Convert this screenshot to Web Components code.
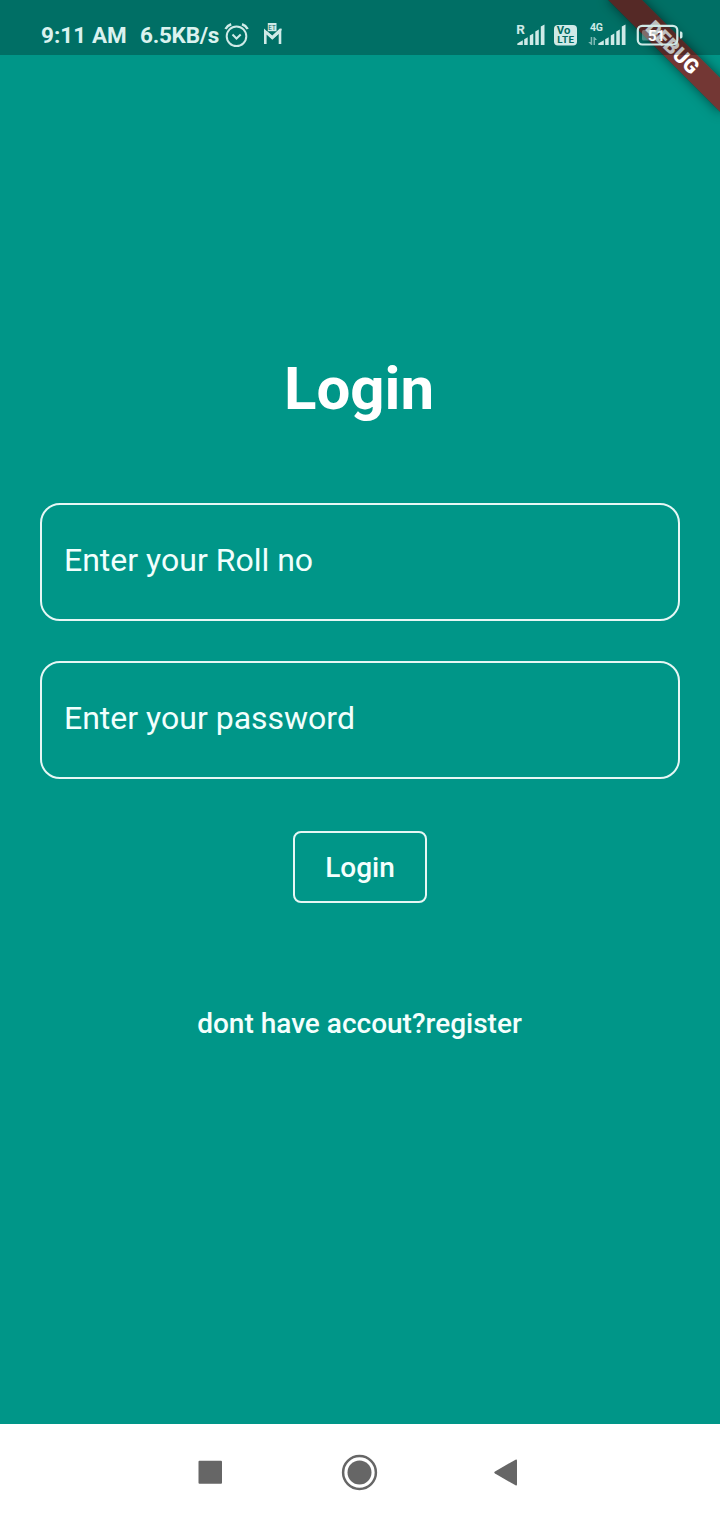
<!DOCTYPE html>
<html lang="en"><head><meta charset="utf-8"><title>Login</title>
<style>html,body{margin:0;width:720px;height:1520px;overflow:hidden;font-family:Roboto,sans-serif;background:#009688}</style></head>
<body>
<phone-screen>
  <status-bar slot="status"></status-bar>
  <debug-banner slot="banner"></debug-banner>
  <login-form>
    <outline-field>Enter your Roll no</outline-field>
    <outline-field>Enter your password</outline-field>
  </login-form>
  <nav-bar slot="nav"></nav-bar>
</phone-screen>
<script>
const define = (name, html) => {
  const t = document.createElement('template');
  t.innerHTML = html;
  customElements.define(name, class extends HTMLElement {
    constructor() { super(); this.attachShadow({mode: 'open'}).append(t.content.cloneNode(true)); }
  });
};
define('phone-screen', `<style>
:host{display:flex;flex-direction:column;position:relative;width:720px;height:1520px;background:#009688;color:#fff;overflow:hidden}
main{flex:1;display:flex;flex-direction:column}
</style><slot name="banner"></slot><slot name="status"></slot><main><slot></slot></main><slot name="nav"></slot>`);

define('debug-banner', `<style>
:host{position:absolute;left:720px;top:0;width:0;height:0;transform:rotate(45deg);transform-origin:0 0}
div{position:absolute;left:-80px;top:55px;width:160px;height:24px;line-height:25px;text-align:center;font-size:20.4px;font-weight:900;background:rgba(183,28,28,.627);box-shadow:0 0 12px rgba(0,0,0,.5)}
.shade{background:rgba(0,0,0,.32);box-shadow:none}
</style><div class="shade"></div><div>DEBUG</div>`);

define('status-bar', `<style>
:host{display:flex;box-sizing:border-box;height:55px;padding:15px 36px 0 41px;background:rgba(0,0,0,.255);position:relative;color:#daf2ef;font-weight:700;font-size:22.5px;line-height:40px;white-space:pre}
svg{display:block;margin-top:5px;fill:#cfeae7;font-family:Roboto,sans-serif;font-weight:700;overflow:visible}
.time{width:99px;letter-spacing:.05px}.speed{width:83px;letter-spacing:-.25px}.gap{flex:1}
</style>
<span class="time">9:11 AM</span><span class="speed">6.5KB/s</span>
<svg width="28" height="32" viewBox="223 20 28 32"><g fill="none" stroke="#cfeae7" stroke-width="2"><circle cx="236.500" cy="36.300" r="9.800"/><path d="M232.500 34.500l4 4 4.200-4"/><path stroke-width="2.500" d="M225.500 29q2-3.500 5.700-4.700M242 24.300q3.700 1.200 5.700 4.700"/></g></svg>
<svg width="34" height="32" viewBox="251 20 34 32"><path d="M265.300 44V31.500l7 6.500 7.700-7V44" fill="none" stroke="#cfeae7" stroke-width="2.600"/><path d="M263.700 31.500l3-.5 5.600 4.500 7.500-7 2 .8-1 2.500-8.500 7.500z"/><path d="M267.800 23h8.700v8.200h-8.700z"/><text x="268.300" y="29.800" font-size="6.300" font-weight="400" fill="#00655b">ET</text></svg>
<span class="gap"></span>
<svg width="167" height="32" viewBox="517 20 167 32">
<text x="516.300" y="34" font-size="13.500" font-weight="700">R</text>
<path id="b" d="M517.300 45v-1.500l5.500-3.300V45zM524.200 39.200l3.500-2V45h-3.500zM529.800 35.500l3.500-2V45h-3.500zM535.300 31.500l3.500-2V45h-3.500zM540.800 26.500l3.700-2V45h-3.700z"/>
<rect x="554" y="25" width="23" height="20.500" rx="4"/>
<g fill="#006b60"><text x="556.800" y="34" font-size="10" textLength="13.500" lengthAdjust="spacingAndGlyphs">Vo</text><text x="557.300" y="43.300" font-size="9.800" textLength="16.800">LTE</text></g>
<text x="590" y="30.500" font-size="10.500" textLength="13">4G</text>
<path opacity=".6" d="M590.700 37h1.500v8h-1l-3-3h2.500zM593.500 37h1l2.500 3h-2v5h-1.500z"/>
<use href="#b" x="81"/>
<rect x="637.800" y="25.800" width="39.500" height="18.700" rx="4.500" fill="none" stroke="#cfeae7" stroke-width="2.200"/>
<rect x="642" y="30" width="16" height="10.500" rx="1.500" opacity=".35"/>
<text x="648" y="40.500" font-size="15" fill="#fff">51</text>
<path d="M680 31.500h1q1.500 0 1.500 2v3q0 2-1.500 2h-1z"/>
</svg>`);

define('outline-field', `<style>
:host{display:block;box-sizing:border-box;width:640px;height:118px;margin-bottom:40px;padding:0 22px;border:2px solid #e6f7f5;border-radius:20px;font-size:32px;line-height:111px;color:#f1fffd}
</style><slot></slot>`);

define('login-form', `<style>
:host{display:flex;flex-direction:column;align-items:center}
h1{margin:299px 2px 79px 0;font-size:60px;line-height:70px;font-weight:700}
button{box-sizing:border-box;width:134px;height:72px;margin:12px 0 0;padding:2px 0 0;border:2px solid #e6f7f5;border-radius:8px;background:none;color:#f4fffd;font:500 28px/66px Roboto,sans-serif}
p{margin:104px 1px 0 0;font-size:28px;line-height:34px;font-weight:500;color:#f4fffd}
</style><h1>Login</h1><slot></slot><button>Login</button><p>dont have accout?register</p>`);

define('nav-bar', `<style>
:host{display:block;height:96px;background:#fff}
svg{display:block;fill:#666}
</style><svg width="720" height="96" viewBox="0 1424 720 96"><rect x="198.500" y="1460.800" width="23.500" height="23" rx="1"/><circle cx="359.500" cy="1472.500" r="16.400" fill="none" stroke="#666" stroke-width="2.500"/><circle cx="359.500" cy="1472.500" r="12"/><path d="M495 1471.500l20.500-11.800q1.500-.7 1.500 1v23.600q0 1.700-1.500 1L495 1473.500q-1.500-1 0-2z"/></svg>`);
</script></body></html>
